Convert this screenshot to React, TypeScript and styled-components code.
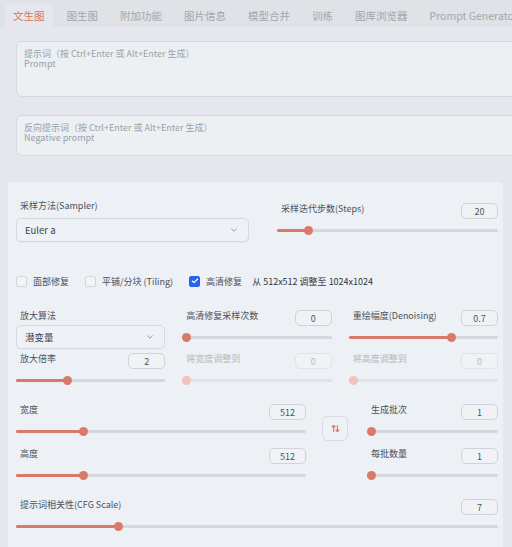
import styled, { createGlobalStyle, css } from 'styled-components';
import { ArrowUpDown, ChevronDown, Check } from 'lucide-react';

const GlobalStyle = createGlobalStyle`
  body {
    margin: 0;
    background: #e6e6ef;
    overflow: hidden;
    font-family: "Noto Sans CJK SC", "Noto Sans", sans-serif;
  }
`;

const StyledTabBar = styled.nav`
  display: flex;
  align-items: flex-end;
  gap: 6px;
  height: 27px;
  padding-left: 5px;
  background: #dfe2e7;
  white-space: nowrap;
`;

const StyledTab = styled.div<{ $active?: boolean }>`
  height: 23px;
  padding: 0 8px;
  display: flex;
  align-items: center;
  font-size: 10.5px;
  color: #a2a7b0;
  border-radius: 5px 5px 0 0;
  ${(p) =>
    p.$active &&
    css`
      background: #e6e6ef;
      color: #d9735f;
    `}
`;

const StyledPromptArea = styled.div`
  display: flex;
  flex-direction: column;
  gap: 18px;
  width: 540px;
  padding: 14px 0 0 16px;
`;

const StyledTextArea = styled.textarea<{ $height: number }>`
  box-sizing: border-box;
  height: ${(p) => p.$height}px;
  padding: 7px 7px;
  resize: none;
  border: 1px solid #d5d8df;
  border-radius: 6px;
  background: #ecf0f3;
  font-family: inherit;
  font-size: 9px;
  line-height: 10px;
  &::placeholder {
    color: #9aa0aa;
  }
`;

const StyledPanel = styled.section`
  box-sizing: border-box;
  width: 495px;
  margin: 26px 0 0 8px;
  padding: 18px 5px 30px 8px;
  background: #edf0f4;
  border-radius: 4px 4px 0 0;
  display: flex;
  flex-direction: column;
`;

const StyledRow = styled.div<{ $gap?: number; $mt?: number }>`
  display: flex;
  align-items: flex-start;
  gap: ${(p) => p.$gap ?? 0}px;
  margin-top: ${(p) => p.$mt ?? 0}px;
`;

const StyledCol = styled.div<{ $width?: number; $gap?: number }>`
  display: flex;
  flex-direction: column;
  gap: ${(p) => p.$gap ?? 0}px;
  ${(p) => (p.$width ? `width: ${p.$width}px; flex: none;` : 'flex: 1; min-width: 0;')}
`;

const StyledLabel = styled.span<{ $disabled?: boolean }>`
  padding-left: 4px;
  font-size: 9px;
  line-height: 11px;
  color: ${(p) => (p.$disabled ? '#b5b9c1' : '#4b5260')};
  white-space: nowrap;
`;

const StyledLabelLine = styled.div<{ $height: number }>`
  display: flex;
  align-items: flex-start;
  height: ${(p) => p.$height}px;
`;

const StyledSelect = styled.div`
  box-sizing: border-box;
  height: 24px;
  display: flex;
  align-items: center;
  justify-content: space-between;
  padding: 0 9px 0 8px;
  border: 1px solid #d5d8df;
  border-radius: 5px;
  background: #eef1f5;
  font-size: 9.5px;
  color: #3b4250;
  box-shadow: 0 1px 1px rgba(0, 0, 0, 0.03);
`;

const StyledFieldHead = styled.div`
  display: flex;
  justify-content: space-between;
  align-items: flex-start;
  height: 16px;
`;

const StyledNumber = styled.div<{ $disabled?: boolean }>`
  box-sizing: border-box;
  width: 37px;
  height: 16px;
  display: flex;
  align-items: center;
  justify-content: center;
  border: 1px solid ${(p) => (p.$disabled ? '#e0e3e8' : '#cfd3da')};
  border-radius: 5px;
  background: #f0f2f5;
  font-size: 9px;
  color: ${(p) => (p.$disabled ? '#b7bbc3' : '#4b5260')};
`;

const StyledTrack = styled.div<{ $disabled?: boolean }>`
  position: relative;
  height: 22px;
  &::before {
    content: '';
    position: absolute;
    left: 0;
    right: 0;
    top: 10px;
    height: 3px;
    border-radius: 2px;
    background: ${(p) => (p.$disabled ? '#e0e2e7' : '#d4d7dd')};
  }
`;

const StyledFill = styled.div<{ $disabled?: boolean }>`
  position: absolute;
  left: 0;
  top: 10px;
  height: 3px;
  border-radius: 2px;
  background: ${(p) => (p.$disabled ? '#efc9bf' : '#d8796a')};
`;

const StyledThumb = styled.div<{ $disabled?: boolean }>`
  position: absolute;
  top: 7px;
  width: 9px;
  height: 9px;
  margin-left: -4.5px;
  border-radius: 50%;
  background: ${(p) => (p.$disabled ? '#efc4b8' : '#d8796a')};
`;

const StyledCheckRow = styled.div`
  display: flex;
  align-items: center;
  margin-top: 33px;
  height: 12px;
  font-size: 9px;
  color: #4b5260;
  white-space: nowrap;
`;

const StyledCheckItem = styled.label`
  display: flex;
  align-items: center;
  gap: 6px;
  margin-right: 16px;
`;

const StyledBox = styled.span<{ $checked?: boolean }>`
  box-sizing: border-box;
  width: 11px;
  height: 11px;
  border-radius: 2px;
  display: flex;
  align-items: center;
  justify-content: center;
  border: 1px solid ${(p) => (p.$checked ? '#2563eb' : '#d3d6dc')};
  background: ${(p) => (p.$checked ? '#2563eb' : '#f3f4f6')};
  color: #fff;
`;

const StyledHint = styled.span`
  margin-left: -6px;
  color: #2f3746;
`;

const StyledSwap = styled.button`
  box-sizing: border-box;
  width: 26px;
  height: 25px;
  margin-top: 12px;
  flex: none;
  display: flex;
  align-items: center;
  justify-content: center;
  padding: 0;
  border: 1px solid #d8dbe1;
  border-radius: 5px;
  background: #eef1f5;
  color: #d8796a;
`;

type SliderProps = {
  label: string;
  value: number;
  min: number;
  max: number;
  disabled?: boolean;
};

const SliderField = ({ label, value, min, max, disabled }: SliderProps) => {
  const pct = (value - min) / (max - min);
  const pos = `calc(4.5px + ${pct} * (100% - 9px))`;
  return (
    <div>
      <StyledFieldHead>
        <StyledLabel $disabled={disabled}>{label}</StyledLabel>
        <StyledNumber $disabled={disabled}>{value}</StyledNumber>
      </StyledFieldHead>
      <StyledTrack $disabled={disabled}>
        <StyledFill $disabled={disabled} style={{ width: pos }} />
        <StyledThumb $disabled={disabled} style={{ left: pos }} />
      </StyledTrack>
    </div>
  );
};

const tabs = ['文生图', '图生图', '附加功能', '图片信息', '模型合并', '训练', '图库浏览器', 'Prompt Generator'];

export default function App() {
  return (
    <>
      <GlobalStyle />
      <StyledTabBar>
        {tabs.map((t, i) => (
          <StyledTab key={t} $active={i === 0}>
            {t}
          </StyledTab>
        ))}
      </StyledTabBar>
      <StyledPromptArea>
        <StyledTextArea $height={56} placeholder={'提示词（按 Ctrl+Enter 或 Alt+Enter 生成）\nPrompt'} />
        <StyledTextArea $height={41} placeholder={'反向提示词（按 Ctrl+Enter 或 Alt+Enter 生成）\nNegative prompt'} />
      </StyledPromptArea>
      <StyledPanel>
        <StyledRow $gap={28}>
          <StyledCol $width={233} $gap={4}>
            <StyledLabelLine $height={14}>
              <StyledLabel>采样方法(Sampler)</StyledLabel>
            </StyledLabelLine>
            <StyledSelect>
              Euler a
              <ChevronDown size={10} strokeWidth={1.6} color="#6b7280" />
            </StyledSelect>
          </StyledCol>
          <StyledCol>
            <div style={{ height: 3 }} />
            <SliderField label="采样迭代步数(Steps)" value={20} min={1} max={150} />
          </StyledCol>
        </StyledRow>

        <StyledCheckRow>
          <StyledCheckItem>
            <StyledBox />
            面部修复
          </StyledCheckItem>
          <StyledCheckItem>
            <StyledBox />
            平铺/分块 (Tiling)
          </StyledCheckItem>
          <StyledCheckItem>
            <StyledBox $checked>
              <Check size={8} strokeWidth={3.5} />
            </StyledBox>
            高清修复
          </StyledCheckItem>
          <StyledHint>从 512x512 调整至 1024x1024</StyledHint>
        </StyledCheckRow>

        <StyledRow $gap={17} $mt={23}>
          <StyledCol $gap={0}>
            <StyledLabelLine $height={15}>
              <StyledLabel>放大算法</StyledLabel>
            </StyledLabelLine>
            <StyledSelect>
              潜变量
              <ChevronDown size={10} strokeWidth={1.6} color="#6b7280" />
            </StyledSelect>
            <div style={{ height: 4 }} />
            <SliderField label="放大倍率" value={2} min={1} max={4} />
          </StyledCol>
          <StyledCol $gap={5}>
            <SliderField label="高清修复采样次数" value={0} min={0} max={150} />
            <SliderField label="将宽度调整到" value={0} min={0} max={2048} disabled />
          </StyledCol>
          <StyledCol $gap={5}>
            <SliderField label="重绘幅度(Denoising)" value={0.7} min={0} max={1} />
            <SliderField label="将高度调整到" value={0} min={0} max={2048} disabled />
          </StyledCol>
        </StyledRow>

        <StyledRow $mt={13}>
          <StyledCol $width={290} $gap={6}>
            <SliderField label="宽度" value={512} min={64} max={2048} />
            <SliderField label="高度" value={512} min={64} max={2048} />
          </StyledCol>
          <div style={{ width: 16 }} />
          <StyledSwap>
            <ArrowUpDown size={9} strokeWidth={3} />
          </StyledSwap>
          <div style={{ width: 19 }} />
          <StyledCol $gap={6}>
            <SliderField label="生成批次" value={1} min={1} max={100} />
            <SliderField label="每批数量" value={1} min={1} max={8} />
          </StyledCol>
        </StyledRow>

        <StyledRow $mt={13}>
          <StyledCol>
            <SliderField label="提示词相关性(CFG Scale)" value={7} min={1} max={30} />
          </StyledCol>
        </StyledRow>
      </StyledPanel>
    </>
  );
}
